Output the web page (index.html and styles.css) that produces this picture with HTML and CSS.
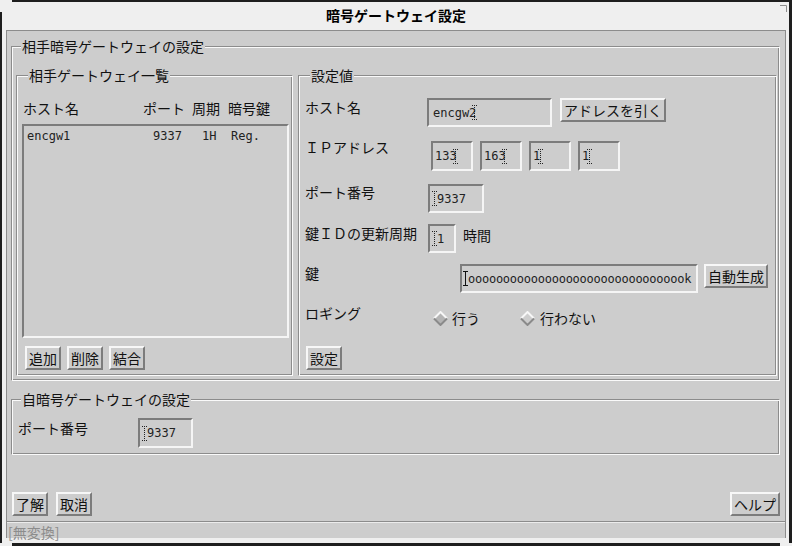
FILE: index.html
```html
<!DOCTYPE html>
<html lang="ja">
<head>
<meta charset="utf-8">
<title>暗号ゲートウェイ設定</title>
<link rel="stylesheet" href="styles.css">
</head>
<body>
<div class="window">
  <div class="titlebar">暗号ゲートウェイ設定</div>
  <div class="client">
    <div class="main">
      <div class="group peer">
        <span class="legend">相手暗号ゲートウェイの設定</span>
        <div class="group list-group">
          <span class="legend legend-inner">相手ゲートウェイ一覧</span>
          <div class="list-head">
            <span class="h-host">ホスト名</span><span class="h-port">ポート</span><span class="h-cyc">周期</span><span class="h-key">暗号鍵</span>
          </div>
          <div class="listbox">
            <div class="list-row"><span class="c-host">encgw1</span><span class="c-port">9337</span><span class="c-cyc">1H</span><span class="c-key">Reg.</span></div>
          </div>
          <div class="btn-row">
            <button class="btn">追加</button><button class="btn">削除</button><button class="btn">結合</button>
          </div>
        </div>
        <div class="group settings">
          <span class="legend legend-inner">設定値</span>
          <div class="srow row-host">
            <span class="slabel lab-host">ホスト名</span>
            <div class="field f-host"><span>encgw2</span><svg class="caret caret-end" width="5" height="15" viewBox="0 0 5 15"><path d="M0 .5h5M2.5 0v15M0 14.5h5" stroke="#222" stroke-dasharray="1 1" fill="none"/></svg></div>
            <button class="btn btn-lookup">アドレスを引く</button>
          </div>
          <div class="srow row-ip">
            <span class="slabel lab-ip">ＩＰアドレス</span>
            <div class="field f-ip"><span>133</span><svg class="caret caret-end" width="5" height="15" viewBox="0 0 5 15"><path d="M0 .5h5M2.5 0v15M0 14.5h5" stroke="#222" stroke-dasharray="1 1" fill="none"/></svg></div>
            <div class="field f-ip"><span>163</span><svg class="caret caret-end" width="5" height="15" viewBox="0 0 5 15"><path d="M0 .5h5M2.5 0v15M0 14.5h5" stroke="#222" stroke-dasharray="1 1" fill="none"/></svg></div>
            <div class="field f-ip"><span>1</span><svg class="caret caret-end-1" width="5" height="15" viewBox="0 0 5 15"><path d="M0 .5h5M2.5 0v15M0 14.5h5" stroke="#222" stroke-dasharray="1 1" fill="none"/></svg></div>
            <div class="field f-ip"><span>1</span><svg class="caret caret-end-1" width="5" height="15" viewBox="0 0 5 15"><path d="M0 .5h5M2.5 0v15M0 14.5h5" stroke="#222" stroke-dasharray="1 1" fill="none"/></svg></div>
          </div>
          <div class="srow row-port">
            <span class="slabel lab-port">ポート番号</span>
            <div class="field f-port"><svg class="caret" width="5" height="15" viewBox="0 0 5 15"><path d="M0 .5h5M2.5 0v15M0 14.5h5" stroke="#222" stroke-dasharray="1 1" fill="none"/></svg><span>9337</span></div>
          </div>
          <div class="srow row-kid">
            <span class="slabel lab-kid">鍵ＩＤの更新周期</span>
            <div class="field f-kid"><svg class="caret" width="5" height="15" viewBox="0 0 5 15"><path d="M0 .5h5M2.5 0v15M0 14.5h5" stroke="#222" stroke-dasharray="1 1" fill="none"/></svg><span>1</span></div>
            <span class="unit">時間</span>
          </div>
          <div class="srow row-key">
            <span class="slabel lab-key">鍵</span>
            <div class="field f-key"><svg class="caret" width="5" height="15" viewBox="0 0 5 15"><path d="M0 .5h5M2.5 0v15M0 14.5h5" stroke="#111" fill="none"/></svg><span class="keytext">oooooooooooooooooooooooooooooook</span></div>
            <button class="btn btn-gen">自動生成</button>
          </div>
          <div class="srow row-log">
            <span class="slabel lab-log">ロギング</span>
            <div class="radios">
              <span class="radio radio-first"><svg width="15" height="15" viewBox="0 0 15 15"><path d="M7.5 1 L14 7.5 L7.5 14 L1 7.5 Z" fill="#b4b4b4"/><path d="M1 7.5 L7.5 1 L14 7.5" stroke="#f7f7f7" stroke-width="2" fill="none"/><path d="M1 7.5 L7.5 14 L14 7.5" stroke="#8a8a8a" stroke-width="2" fill="none"/></svg><span>行う</span></span>
              <span class="radio"><svg width="15" height="15" viewBox="0 0 15 15"><path d="M7.5 1 L14 7.5 L7.5 14 L1 7.5 Z" fill="#cdcdcd"/><path d="M1 7.5 L7.5 1 L14 7.5" stroke="#f7f7f7" stroke-width="2" fill="none"/><path d="M1 7.5 L7.5 14 L14 7.5" stroke="#8a8a8a" stroke-width="2" fill="none"/></svg><span>行わない</span></span>
            </div>
          </div>
          <div class="srow row-set">
            <button class="btn">設定</button>
          </div>
        </div>
      </div>
      <div class="group self">
        <span class="legend">自暗号ゲートウェイの設定</span>
        <div class="self-row">
          <span class="slabel lab-self">ポート番号</span>
          <div class="field f-self"><svg class="caret" width="5" height="15" viewBox="0 0 5 15"><path d="M0 .5h5M2.5 0v15M0 14.5h5" stroke="#222" stroke-dasharray="1 1" fill="none"/></svg><span>9337</span></div>
        </div>
      </div>
      <div class="actions">
        <button class="btn">了解</button><button class="btn">取消</button><button class="btn btn-help">ヘルプ</button>
      </div>
    </div>
    <div class="status"><span class="ime">[無変換]</span></div>
  </div>
</div>
<div class="corner corner-tl"></div>
<div class="corner corner-tr"><svg width="12" height="12" viewBox="0 0 12 12"><path d="M0 5.5H6.5V12" stroke="#8c8c8c" fill="none"/></svg></div>
<div class="corner corner-bl"></div>
<div class="corner corner-br"></div>
</body>
</html>
```
FILE: styles.css
```css
* { box-sizing: border-box; }
html, body { margin: 0; padding: 0; }
body {
  position: relative;
  background: #1e1e1e;
  width: 792px;
  height: 546px;
  overflow: hidden;
  font-family: "Noto Sans CJK JP", "Noto Sans", sans-serif;
  font-size: 14px;
  line-height: 16px;
  color: #111;
}
.window {
  margin: 2px 0 0 2px;
  width: 787px;
  height: 541px;
  background: #efefef;
  padding: 0 3px 5px 4px;
  display: flex;
  flex-direction: column;
}
.titlebar {
  height: 28px;
  display: flex;
  align-items: center;
  justify-content: center;
  font-weight: bold;
  font-size: 14px;
  color: #000;
  padding-bottom: 2px;
}
.client {
  flex: 1;
  display: flex;
  flex-direction: column;
  border: 1px solid #8c8c8c;
  border-bottom: 0;
  background: #cdcdcd;
}
.main {
  height: 490px;
  display: flex;
  flex-direction: column;
  padding: 15px 5px 5px 4px;
}
.status {
  height: 17px;
  border-top: 1px solid #8c8c8c;
  box-shadow: inset 0 1px 0 #ececec;
  padding: 2px 0 0 1px;
}
.ime {
  color: #8c8c8c;
  font-size: 14px;
  line-height: 15px;
}

/* resize handles of the window frame */
.corner { position: absolute; background: #efefef; }
.corner-tl { left: 0; top: 0; width: 12px; height: 2px; box-shadow: 0 0 0 0 #efefef; }
.corner-tl::after { content: ""; position: absolute; left: 0; top: 0; width: 2px; height: 12px; background: #efefef; }
.corner-tr { right: 0; top: 0; width: 12px; height: 12px; background: transparent; }
.corner-tr svg { display: block; }
.corner-bl { left: 0; bottom: 0; width: 12px; height: 3px; }
.corner-br { right: 0; bottom: 0; width: 12px; height: 3px; }

/* etched group boxes */
.group {
  position: relative;
  border: 1px solid;
  border-color: #8c8c8c #fafafa #fafafa #8c8c8c;
  box-shadow: inset 1px 1px 0 #fafafa, inset -1px -1px 0 #8c8c8c;
}
.legend {
  position: absolute;
  top: -9px;
  left: 9px;
  padding: 0 1px;
  background: #cdcdcd;
  line-height: 16px;
  white-space: nowrap;
}
.legend-inner { left: 11px; }

.peer {
  display: flex;
  gap: 5px;
  padding: 28px 2px 4px 4px;
}
.list-group {
  width: 277px;
  flex: none;
  padding: 24px 3px 5px 5px;
  display: flex;
  flex-direction: column;
}
.list-head { display: flex; height: 16px; white-space: nowrap; }
.h-host { width: 120px; margin-left: 1px; }
.h-port { width: 49px; }
.h-cyc { width: 36px; }
.listbox {
  margin-top: 8px;
  height: 214px;
  border: 2px solid;
  border-color: #7c7c7c #f5f5f5 #f5f5f5 #7c7c7c;
  padding: 3px 3px;
  font-family: "DejaVu Sans Mono", monospace;
  font-size: 12px;
  line-height: 14px;
  color: #222;
}
.list-row { display: flex; white-space: nowrap; }
.c-host { width: 126px; }
.c-port { width: 49px; }
.c-cyc { width: 29px; }
.btn-row { margin-top: 8px; display: flex; gap: 6px; padding-left: 3px; }

.btn {
  font-family: "Noto Sans CJK JP", "Noto Sans", sans-serif;
  font-size: 14px;
  line-height: 20px;
  height: 24px;
  padding: 0 2px;
  margin: 0;
  border: 2px solid;
  border-color: #f7f7f7 #7c7c7c #7c7c7c #f7f7f7;
  background: #cdcdcd;
  color: #111;
  white-space: nowrap;
}

.settings {
  flex: 1;
  padding: 22px 4px 5px 6px;
  display: flex;
  flex-direction: column;
}
.srow { display: flex; align-items: flex-start; }
.slabel { flex: none; white-space: nowrap; line-height: 16px; }
.lab-host { width: 122px; margin-top: 1px; }
.lab-ip { width: 126px; margin-top: -2px; }
.lab-port { width: 123px; }
.lab-kid { width: 123px; margin-top: 1px; }
.lab-key { width: 155px; margin-top: 1px; }
.lab-log { width: 128px; }
.row-ip { margin-top: 14px; }
.row-port { margin-top: 13px; }
.row-kid { margin-top: 11px; }
.row-key { margin-top: 11px; }
.row-log { margin-top: 12px; }
.row-set { margin-top: auto; padding-left: 1px; }

.field {
  flex: none;
  height: 29px;
  border: 2px solid;
  border-color: #7c7c7c #f5f5f5 #f5f5f5 #7c7c7c;
  display: flex;
  align-items: center;
  padding: 0 2px;
  font-family: "DejaVu Sans Mono", monospace;
  font-size: 12px;
  color: #222;
  overflow: hidden;
  white-space: nowrap;
}
.caret { flex: none; display: block; }
.caret-end { margin-left: -4px; }
.caret-end-1 { margin-left: -2px; }
.f-host { width: 125px; padding-left: 4px; }
.f-ip { width: 42px; height: 30px; margin-right: 7px; }
.f-port { width: 56px; }
.f-kid { width: 28px; }
.f-key { width: 238px; padding-left: 1px; }
.keytext { letter-spacing: -0.25px; }
.unit { margin-left: 7px; margin-top: 3px; }
.btn-lookup { margin-left: 8px; }
.btn-gen { margin-left: 6px; }

.radios { display: flex; margin-top: 5px; }
.radio { display: flex; align-items: center; gap: 5px; line-height: 16px; }
.radio svg { display: block; flex: none; }
.radio-first { width: 87px; gap: 4px; }

.self {
  margin-top: 18px;
  padding: 18px 6px 6px 6px;
}
.self-row { display: flex; align-items: flex-start; }
.lab-self { width: 120px; margin-top: 2px; }
.f-self { width: 55px; height: 30px; }

.actions {
  margin-top: auto;
  display: flex;
  gap: 8px;
  padding-left: 1px;
}
.btn-help { margin-left: auto; }
```
